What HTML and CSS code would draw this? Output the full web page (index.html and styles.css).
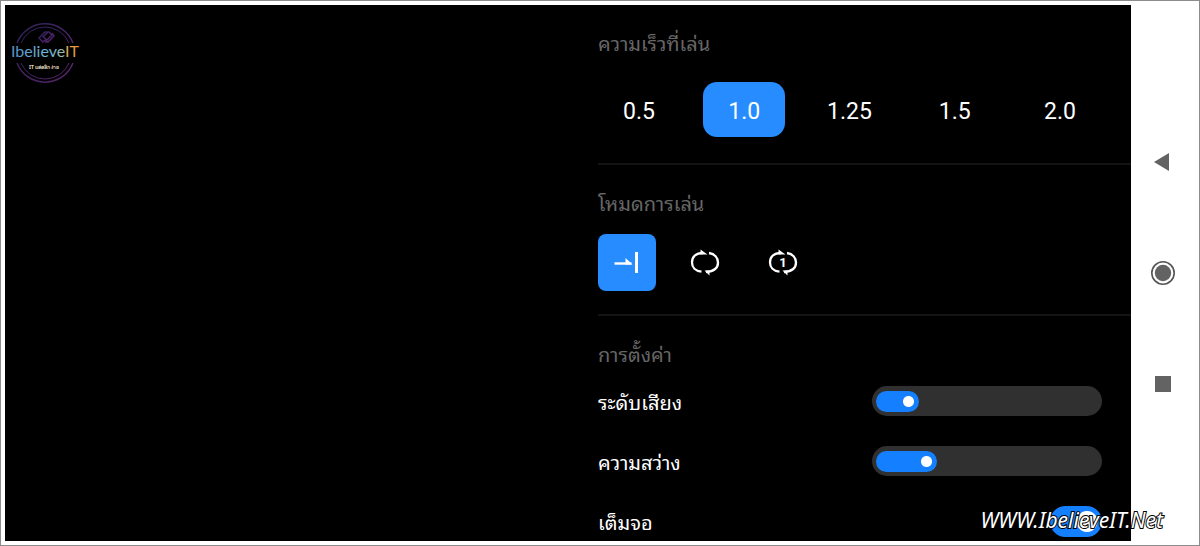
FILE: index.html
```html
<!DOCTYPE html>
<html lang="th">
<head>
<meta charset="utf-8">
<meta name="viewport" content="width=device-width, initial-scale=1">
<title>IbelieveIT</title>
<link rel="stylesheet" href="styles.css">
</head>
<body>
<div class="frame">
  <main class="player">
    <div class="stage">
      <svg class="logo" viewBox="0 0 72 66" role="img" aria-label="IbelieveIT">
        <defs>
          <linearGradient id="ring" x1="0" y1="0" x2="1" y2="1">
            <stop offset="0" stop-color="#2c2258"/>
            <stop offset="1" stop-color="#5b2470"/>
          </linearGradient>
          <linearGradient id="word" x1="0" y1="0" x2="1" y2="0">
            <stop offset="0" stop-color="#5590c8"/>
            <stop offset="0.55" stop-color="#68b8e0"/>
            <stop offset="0.79" stop-color="#a0b8a0"/>
            <stop offset="0.82" stop-color="#e0a840"/>
            <stop offset="1" stop-color="#e89030"/>
          </linearGradient>
        </defs>
        <g fill="none" stroke="url(#ring)">
          <path d="M6 23A30 30 0 0 1 62 23M6 43A30 30 0 0 0 62 43" stroke-width="1.500"/>
          <path d="M10 23A26 26 0 0 1 58 23M10 43A26 26 0 0 0 58 43" stroke-width="1"/>
          <path d="M34 12l-6 6 4 4 3-3-3-2 5-5zM35 21l6-6-3-3M38 12h-2M34 22l3 0 6-6-2-3" stroke-width="1.500"/>
        </g>
        <text class="logo-word" x="0" y="37" fill="url(#word)">IbelieveIT</text>
        <text class="logo-tag" x="18" y="49">IT แค่คลิก ง่าย</text>
      </svg>
    </div>

    <div class="panel">
      <section class="group">
        <h2 class="title">ความเร็วที่เล่น</h2>
        <div class="speeds">
          <button class="speed" type="button">0.5</button>
          <button class="speed selected" type="button" aria-pressed="true">1.0</button>
          <button class="speed" type="button">1.25</button>
          <button class="speed" type="button">1.5</button>
          <button class="speed" type="button">2.0</button>
        </div>
      </section>

      <section class="group">
        <h2 class="title">โหมดการเล่น</h2>
        <div class="modes">
          <button class="mode selected" type="button" aria-label="เล่นจนจบ" aria-pressed="true">
            <svg class="icon" viewBox="0 0 32 32" aria-hidden="true">
              <path d="M3.500 16.500h17" fill="none" stroke="#fff" stroke-width="2.400"/>
              <path d="M14.500 11l7 6.500h-7z" fill="#fff"/>
              <path d="M25.500 5v21" fill="none" stroke="#fff" stroke-width="3"/>
            </svg>
          </button>
          <button class="mode" type="button" aria-label="เล่นซ้ำ">
            <svg class="icon" viewBox="0 0 32 32" aria-hidden="true">
              <g fill="none" stroke="#fff" stroke-width="2.300">
                <path d="M14 6C6.800 6 3 10 3 15.500c0 5 3.500 8.700 9.500 9.200"/>
                <path d="M20 6C26 7 29 11 29 15.500c0 5.500-4 9-12 9.500"/>
              </g>
              <path d="M11.500 2.500l7 5h-7zM20.500 28.500l-5-5h5z" fill="#fff"/>
            </svg>
          </button>
          <button class="mode" type="button" aria-label="เล่นซ้ำหนึ่งรายการ">
            <svg class="icon" viewBox="0 0 32 32" aria-hidden="true">
              <g fill="none" stroke="#fff" stroke-width="2.300">
                <path d="M14 6C6.800 6 3 10 3 15.500c0 5 3.500 8.700 9.500 9.200"/>
                <path d="M20 6C26 7 29 11 29 15.500c0 5.500-4 9-12 9.500"/>
              </g>
              <path d="M11.500 2.500l7 5h-7zM20.500 28.500l-5-5h5z" fill="#fff"/>
              <text class="once" x="16" y="20">1</text>
            </svg>
          </button>
        </div>
      </section>

      <section class="group">
        <h2 class="title">การตั้งค่า</h2>
        <div class="settings">
          <div class="setting">
            <label for="volume">ระดับเสียง</label>
            <input class="slider" id="volume" type="range" min="0" max="100" value="11" style="--fill:15%">
          </div>
          <div class="setting">
            <label for="brightness">ความสว่าง</label>
            <input class="slider" id="brightness" type="range" min="0" max="100" value="20" style="--fill:23%">
          </div>
          <div class="setting">
            <label for="fullscreen">เต็มจอ</label>
            <input class="switch" id="fullscreen" type="checkbox" checked>
          </div>
        </div>
      </section>
    </div>
  </main>

  <nav class="keys">
    <button class="key" type="button" aria-label="Back">
      <svg class="key-icon" viewBox="0 0 26 26"><path d="M4 13L19 4v18z" fill="#636363"/></svg>
    </button>
    <button class="key" type="button" aria-label="Home">
      <svg class="key-icon" viewBox="0 0 26 26"><circle cx="13" cy="13" r="11.200" fill="none" stroke="#555" stroke-width="1.600"/><circle cx="13" cy="13" r="8.200" fill="#636363"/></svg>
    </button>
    <button class="key" type="button" aria-label="Recent apps">
      <svg class="key-icon" viewBox="0 0 26 26"><path d="M5 5h16v16H5z" fill="#636363"/></svg>
    </button>
  </nav>
  <div class="watermark">WWW.IbelieveIT.Net</div>
</div>
</body>
</html>
```

FILE: styles.css
```css
* {
  box-sizing: border-box;
}

body {
  margin: 0;
  font-family: "Roboto", "Noto Sans Thai Looped", "Droid Sans Thai", "Loma", "Waree", "Garuda", "Noto Sans Thai", sans-serif;
  color: #fff;
  background: #fff;
}

button {
  padding: 0;
  border: 0;
  background: none;
  color: inherit;
  font: inherit;
}

.frame {
  position: relative;
  display: flex;
  height: 100vh;
  padding: 4px 0 4px 4px;
  border: 1px solid #8c8c8c;
  background: #fff;
  overflow: hidden;
}

.player {
  display: flex;
  flex: 1;
  min-width: 0;
  background: #000;
  overflow: hidden;
}

.stage {
  flex: 587;
  min-width: 0;
  padding: 15px 0 15px 6px;
}

.logo {
  display: block;
  width: 72px;
  height: 66px;
}

.logo-word {
  font: 16px "Lato", sans-serif;
}

.logo-tag {
  font: bold 5px "Noto Sans", sans-serif;
  fill: #e8dcc0;
}

.panel {
  flex: 533;
  min-width: 0;
}

.group {
  padding: 24px 0 23px;
  border-bottom: 2px solid #141414;
}

.group:last-child {
  border: 0;
}

.title {
  margin: 0;
  font-size: 20px;
  font-weight: 400;
  line-height: 30px;
  color: #666;
}

.speeds {
  display: flex;
  justify-content: space-between;
  padding: 23px 30px 3px 0;
}

.speed {
  width: 82px;
  height: 55px;
  padding-top: 3px;
  border-radius: 14px;
  font-size: 23px;
}

.selected {
  background: #268cff;
}

.modes {
  display: flex;
  gap: 20px;
  padding-top: 15px;
}

.mode {
  display: grid;
  place-items: center;
  width: 58px;
  height: 57px;
  border-radius: 8px;
}

.icon {
  width: 32px;
  height: 32px;
}

.once {
  font: bold 13px "Roboto", sans-serif;
  text-anchor: middle;
  fill: #fff;
}

.settings {
  padding: 1px 29px 0 0;
}

.setting {
  display: flex;
  align-items: center;
  justify-content: space-between;
  height: 60px;
  font-size: 20px;
}

.slider {
  appearance: none;
  width: 230px;
  height: 30px;
  margin: 0;
  padding: 0 4px;
  border-radius: 15px;
  background: #303030;
}

.slider::-webkit-slider-runnable-track {
  height: 21px;
  border-radius: 11px;
  background: linear-gradient(to right, #1480ff var(--fill), transparent var(--fill));
}

.slider::-webkit-slider-thumb {
  appearance: none;
  width: 21px;
  height: 21px;
  border-radius: 50%;
  background: radial-gradient(circle, #fff 5px, #1480ff 6px);
}

.switch {
  appearance: none;
  width: 52px;
  height: 31px;
  margin: 0;
  border-radius: 16px;
  background: radial-gradient(circle at 37px 50%, #fff 10px, #1480ff 11px);
}

.keys {
  display: flex;
  flex-direction: column;
  align-items: center;
  justify-content: center;
  gap: 85px;
  width: 68px;
  padding-right: 4px;
}

.key,
.key-icon {
  display: block;
  width: 26px;
  height: 26px;
}

.watermark {
  position: absolute;
  right: 36px;
  bottom: 13px;
  font: italic 21px/24px "Comic Sans MS", "Noto Sans", sans-serif;
  -webkit-text-stroke: 2px #000;
  paint-order: stroke fill;
}
```
